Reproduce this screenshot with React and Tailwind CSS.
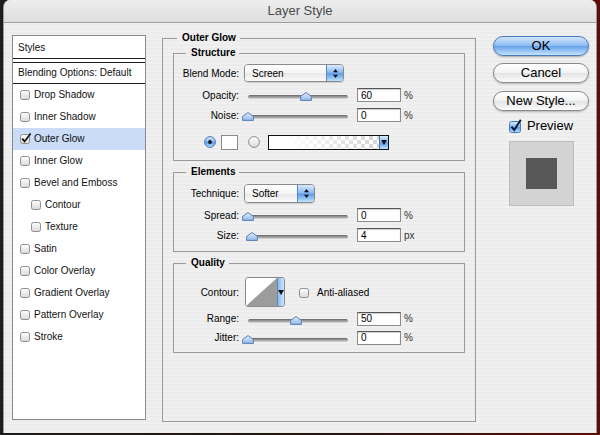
import React from "react";

const F = "font-['Liberation_Sans',Arial,sans-serif]";

function Defs() {
  return (
    <div className="h-0 w-0 overflow-hidden">
      <svg width="0" height="0" className="block">
        <defs>
          <linearGradient id="aqua" x1="0" y1="0" x2="0" y2="1">
            <stop offset="0" stopColor="#d9eafd" />
            <stop offset="0.45" stopColor="#8dbbf1" />
            <stop offset="0.55" stopColor="#5f9de8" />
            <stop offset="1" stopColor="#bfe2fd" />
          </linearGradient>
          <linearGradient id="thumb" x1="0" y1="0" x2="0" y2="1">
            <stop offset="0" stopColor="#e6f0fd" />
            <stop offset="1" stopColor="#8fb6ec" />
          </linearGradient>
          <linearGradient id="cb" x1="0" y1="0" x2="0" y2="1">
            <stop offset="0" stopColor="#ffffff" />
            <stop offset="1" stopColor="#d9d9d9" />
          </linearGradient>
        </defs>
      </svg>
    </div>
  );
}

function Check({ checked }) {
  return (
    <svg width="12" height="11" viewBox="0 0 12 11" className="shrink-0">
      <rect x="0.5" y="1.5" width="9" height="9" rx="2" fill="url(#cb)" stroke="#8e8e8e" />
      {checked && (
        <path d="M2.2 5.6 L4.6 8.4 L10.6 0.6" stroke="#111" strokeWidth="1.7" fill="none" />
      )}
    </svg>
  );
}

function Radio({ on }) {
  return (
    <svg width="12" height="12" viewBox="0 0 12 12" className="shrink-0">
      {on ? (
        <>
          <circle cx="6" cy="6" r="5.4" fill="url(#aqua)" stroke="#4b79b6" />
          <circle cx="6" cy="6" r="1.9" fill="#151515" />
        </>
      ) : (
        <circle cx="6" cy="6" r="5.4" fill="url(#cb)" stroke="#8c8c8c" />
      )}
    </svg>
  );
}

function Stepper() {
  return (
    <div className="w-[17px] h-full flex items-center justify-center border-l border-[#5d86c0] bg-[linear-gradient(#d9eafd,#8dbbf1_45%,#5f9de8_55%,#bfe2fd)]">
      <svg width="7" height="11" viewBox="0 0 7 11">
        <path d="M3.5 1 L6 4.3 H1 Z" fill="#111" />
        <path d="M1 6.7 H6 L3.5 10 Z" fill="#111" />
      </svg>
    </div>
  );
}

function Select({ value, w, h }) {
  return (
    <div className={`ml-[5px] flex rounded-[4px] border border-[#8a8a8a] overflow-hidden shadow-[0_1px_1px_rgba(0,0,0,0.15)] ${w} ${h}`}>
      <div className="flex-1 flex items-center pl-[7px] text-[10px] bg-[linear-gradient(#ffffff,#f4f4f4_50%,#e8e8e8_51%,#fafafa)]">
        {value}
      </div>
      <Stepper />
    </div>
  );
}

function Field({ value }) {
  return (
    <div className="ml-[4px] w-[44px] h-[14px] bg-white border border-[#8b8b8b] border-t-[#555] flex items-center pl-[3px] text-[10px] shadow-[inset_0_1px_1px_rgba(0,0,0,0.2)]">
      {value}
    </div>
  );
}

function Slider({ pct }) {
  return (
    <div className="ml-[4px] w-[110px] h-[12px] relative shrink-0">
      <div className="absolute left-[5px] right-[5px] top-[6px] h-[4px] rounded-full bg-[linear-gradient(#666,#a9a9a9_60%,#dcdcdc)]" />
      <svg
        width="12"
        height="9"
        viewBox="0 0 12 9"
        className="absolute top-[3px]"
        style={{ left: `${pct - 1}px` }}
      >
        <path d="M6 0.6 L11.4 4.4 V8.4 H0.6 V4.4 Z" fill="url(#thumb)" stroke="#5a7fb6" />
      </svg>
    </div>
  );
}

function SliderRow({ label, value, pct, unit, h = "h-[20px]" }) {
  return (
    <div className={`flex items-center ${h}`}>
      <div className="w-[65px] text-right text-[10px]">{label}</div>
      <Slider pct={pct} />
      <Field value={value} />
      <span className="ml-[3px] text-[10px] text-[#333]">{unit}</span>
    </div>
  );
}

function Group({ title, className = "", children }) {
  return (
    <fieldset className={`border border-[#9a9a9a] ${className}`}>
      <legend className="ml-[12px] pl-[5px] pr-[4px] text-[10px] leading-[12px] font-bold">
        {title}
      </legend>
      {children}
    </fieldset>
  );
}

const items = [
  ["Drop Shadow", 0, false],
  ["Inner Shadow", 0, false],
  ["Outer Glow", 0, true],
  ["Inner Glow", 0, false],
  ["Bevel and Emboss", 0, false],
  ["Contour", 1, false],
  ["Texture", 1, false],
  ["Satin", 0, false],
  ["Color Overlay", 0, false],
  ["Gradient Overlay", 0, false],
  ["Pattern Overlay", 0, false],
  ["Stroke", 0, false],
];

function StylesList() {
  return (
    <div className="mt-[12px] w-[134px] h-[385px] bg-white border border-[#8a8a8a] text-[10px] text-[#111] shrink-0">
      <div className="h-[22px] flex items-center pl-[5px]">Styles</div>
      <div className="h-[5px] border-y border-[#1c1c1c]" />
      <div className="h-[21px] flex items-center pl-[5px] pb-[2px] border-b border-[#1c1c1c]">
        Blending Options: Default
      </div>
      {items.map(([name, indent, on]) => (
        <div
          key={name}
          className={`h-[22px] flex items-center gap-[2px] pb-[2px] ${indent ? "pl-[18px]" : "pl-[7px]"} ${on ? "bg-[#cadcf7]" : ""}`}
        >
          <Check checked={on} />
          <span>{name}</span>
        </div>
      ))}
    </div>
  );
}

function Aqua({ children }) {
  return (
    <div className="w-[96px] h-[20px] rounded-full border border-[#4a7bc0] flex items-center justify-center text-[13px] text-black bg-[linear-gradient(#d3e6fc,#8ebcf2_48%,#65a3ea_52%,#c4e4fd)] shadow-[0_1px_2px_rgba(0,0,0,0.3)]">
      {children}
    </div>
  );
}

function White({ children, className = "" }) {
  return (
    <div className={`w-[96px] h-[20px] rounded-full border border-[#8a8a8a] flex items-center justify-center text-[13px] text-black bg-[linear-gradient(#ffffff,#f3f3f3_48%,#e4e4e4_52%,#fbfbfb)] shadow-[0_1px_2px_rgba(0,0,0,0.25)] ${className}`}>
      {children}
    </div>
  );
}

export default function App() {
  return (
    <div className={`w-[600px] h-[435px] overflow-hidden bg-[linear-gradient(90deg,#1d1d1d,#2a1510_60%,#5e0d05)] ${F}`}>
      <Defs />
      <div className="ml-[3px] w-[594px] h-[433px] rounded-t-[7px] overflow-hidden bg-[repeating-linear-gradient(180deg,#ececec_0px,#ececec_2px,#f0f0f0_2px,#f0f0f0_4px)] border-x border-[#9a9a9a]">
        <div className="h-[23px] border-b border-[#9d9d9d] flex items-center justify-center text-[13px] text-[#4b4b4b] bg-[linear-gradient(#ededed,#dedede)]">
          Layer Style
        </div>
        <div className="flex items-start pl-[8px] text-black">
          <StylesList />

          <fieldset className="ml-[16px] mt-[9px] w-[314px] h-[390px] border border-[#9a9a9a] px-[10px] pt-[3px] shrink-0">
            <legend className="ml-[4px] pl-[5px] pr-[4px] text-[10px] leading-[12px] font-bold">
              Outer Glow
            </legend>

            <Group title="Structure" className="pb-[8px]">
              <div className="mt-[4px] h-[20px] flex items-center">
                <div className="w-[65px] text-right text-[10px]">Blend Mode:</div>
                <Select value="Screen" w="w-[100px]" h="h-[18px]" />
              </div>
              <div className="mt-[2px]">
                <SliderRow label="Opacity:" value="60" pct={58} unit="%" />
              </div>
              <SliderRow label="Noise:" value="0" pct={0} unit="%" />
              <div className="mt-[7px] h-[20px] flex items-center pl-[30px]">
                <Radio on />
                <div className="ml-[5px] w-[17px] h-[15px] bg-white border border-[#8a8a8a]" />
                <div className="ml-[10px]">
                  <Radio />
                </div>
                <div className="ml-[8px] h-[15px] flex border border-[#111]">
                  <div className="w-[110px] h-full bg-[linear-gradient(90deg,#ffffff_15%,rgba(255,255,255,0)),repeating-conic-gradient(#d4d4d4_0%_25%,#ffffff_0%_50%)] bg-[length:100%_100%,8px_8px]" />
                  <div className="w-[9px] h-full flex items-center justify-center border-l border-[#4b79b6] bg-[linear-gradient(#d9eafd,#8dbbf1_45%,#5f9de8_55%,#bfe2fd)]">
                    <svg width="6" height="5" viewBox="0 0 6 5">
                      <path d="M0 0 H6 L3 5 Z" fill="#111" />
                    </svg>
                  </div>
                </div>
              </div>
            </Group>

            <Group title="Elements" className="mt-[5px] pb-[6px]">
              <div className="mt-[5px] h-[20px] flex items-center">
                <div className="w-[65px] text-right text-[10px]">Technique:</div>
                <Select value="Softer" w="w-[71px]" h="h-[19px]" />
              </div>
              <div className="mt-[2px]">
                <SliderRow label="Spread:" value="0" pct={0} unit="%" />
              </div>
              <SliderRow label="Size:" value="4" pct={4} unit="px" />
            </Group>

            <Group title="Quality" className="mt-[5px] pb-[5px]">
              <div className="mt-[8px] h-[30px] flex items-center">
                <div className="w-[65px] text-right text-[10px]">Contour:</div>
                <div className="ml-[6px] w-[40px] h-[30px] flex border border-[#8a8a8a] rounded-[3px] overflow-hidden">
                  <svg width="31" height="28" viewBox="0 0 31 28" className="block bg-white">
                    <path d="M0 28 L31 0 V28 Z" fill="#9c9c9c" />
                  </svg>
                  <div className="flex-1 flex items-center justify-center border-l border-[#5d86c0] bg-[linear-gradient(90deg,#8dbbf1,#cfe5fd)]">
                    <svg width="6" height="5" viewBox="0 0 6 5">
                      <path d="M0 0 H6 L3 5 Z" fill="#111" />
                    </svg>
                  </div>
                </div>
                <div className="ml-[14px]">
                  <Check />
                </div>
                <span className="ml-[6px] text-[10px]">Anti-aliased</span>
              </div>
              <div className="mt-[2px]">
                <SliderRow label="Range:" value="50" pct={48} unit="%" h="h-[19px]" />
              </div>
              <SliderRow label="Jitter:" value="0" pct={0} unit="%" h="h-[19px]" />
            </Group>
          </fieldset>

          <div className="ml-[16px] mt-[13px] w-[98px] flex flex-col items-center shrink-0">
            <Aqua>OK</Aqua>
            <White className="mt-[7px]">Cancel</White>
            <White className="mt-[8px]">New Style...</White>
            <div className="mt-[7px] h-[16px] flex items-center gap-[5px]">
              <svg width="13" height="14" viewBox="0 0 13 14">
                <rect x="0.5" y="2.5" width="11" height="11" rx="2" fill="url(#aqua)" stroke="#4b79b6" />
                <path d="M2.5 7.5 L5.2 11 L11.8 0.8" stroke="#0d1b3a" strokeWidth="2" fill="none" />
              </svg>
              <span className="text-[13px]">Preview</span>
            </div>
            <div className="mt-[7px] w-[65px] h-[65px] bg-[#d3d3d3] border border-[#bdbdbd] flex items-center justify-center">
              <div className="w-[31px] h-[31px] bg-[#575757]" />
            </div>
          </div>
        </div>
      </div>
    </div>
  );
}
